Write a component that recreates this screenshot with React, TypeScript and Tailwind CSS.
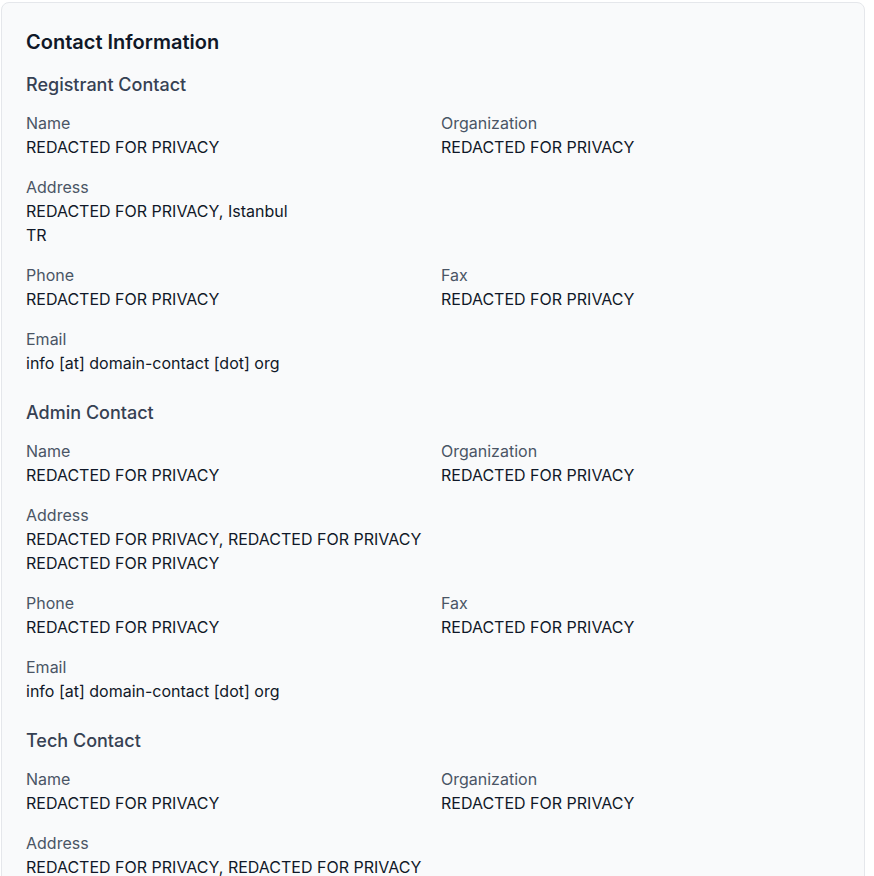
type Field = { label: string; lines: string[]; wide?: boolean };

type Contact = { title: string; fields: Field[] };

const contacts: Contact[] = [
  {
    title: "Registrant Contact",
    fields: [
      { label: "Name", lines: ["REDACTED FOR PRIVACY"] },
      { label: "Organization", lines: ["REDACTED FOR PRIVACY"] },
      { label: "Address", lines: ["REDACTED FOR PRIVACY, Istanbul", "TR"], wide: true },
      { label: "Phone", lines: ["REDACTED FOR PRIVACY"] },
      { label: "Fax", lines: ["REDACTED FOR PRIVACY"] },
      { label: "Email", lines: ["info [at] domain-contact [dot] org"], wide: true },
    ],
  },
  {
    title: "Admin Contact",
    fields: [
      { label: "Name", lines: ["REDACTED FOR PRIVACY"] },
      { label: "Organization", lines: ["REDACTED FOR PRIVACY"] },
      {
        label: "Address",
        lines: ["REDACTED FOR PRIVACY, REDACTED FOR PRIVACY", "REDACTED FOR PRIVACY"],
        wide: true,
      },
      { label: "Phone", lines: ["REDACTED FOR PRIVACY"] },
      { label: "Fax", lines: ["REDACTED FOR PRIVACY"] },
      { label: "Email", lines: ["info [at] domain-contact [dot] org"], wide: true },
    ],
  },
  {
    title: "Tech Contact",
    fields: [
      { label: "Name", lines: ["REDACTED FOR PRIVACY"] },
      { label: "Organization", lines: ["REDACTED FOR PRIVACY"] },
      {
        label: "Address",
        lines: ["REDACTED FOR PRIVACY, REDACTED FOR PRIVACY", "REDACTED FOR PRIVACY"],
        wide: true,
      },
      { label: "Phone", lines: ["REDACTED FOR PRIVACY"] },
      { label: "Fax", lines: ["REDACTED FOR PRIVACY"] },
      { label: "Email", lines: ["info [at] domain-contact [dot] org"], wide: true },
    ],
  },
];

export default function App() {
  return (
    <div
      className="min-h-screen bg-white pt-[2px] pl-[1px]"
      style={{ fontFamily: "Inter, 'Noto Sans', sans-serif" }}
    >
      <div className="w-[864px] rounded-lg border border-gray-200 bg-gray-50 px-6 pt-[25px] pb-6">
        <h2 className="mb-[15px] text-xl leading-7 font-semibold text-gray-900">
          Contact Information
        </h2>
        <div className="flex flex-col gap-6">
          {contacts.map((c) => (
            <ContactBlock key={c.title} contact={c} />
          ))}
        </div>
      </div>
    </div>
  );
}

const ContactBlock = ({ contact }: { contact: Contact }) => {
  return (
    <div>
      <h3 className="mb-3 text-lg leading-7 font-medium text-gray-700">
        {contact.title}
      </h3>
      <div className="grid grid-cols-2 gap-4">
        {contact.fields.map((f) => (
          <div key={f.label} className={f.wide ? "col-span-2" : ""}>
            <div className="text-base leading-6 text-gray-600">{f.label}</div>
            {f.lines.map((line, i) => (
              <div key={i} className="text-base leading-6 text-gray-900">
                {line}
              </div>
            ))}
          </div>
        ))}
      </div>
    </div>
  );
}
